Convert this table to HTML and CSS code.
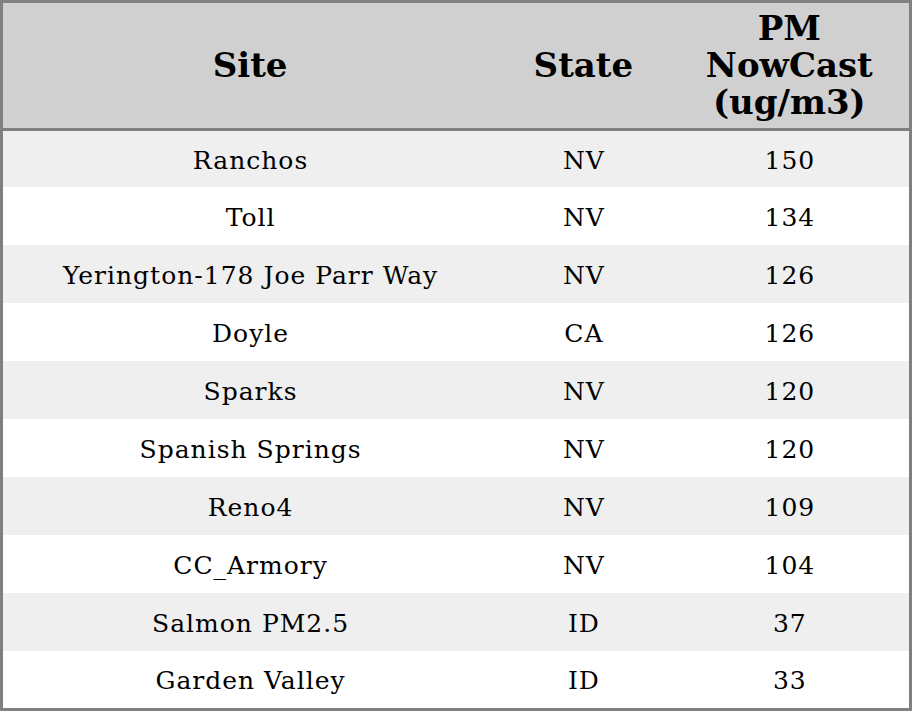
FILE: index.html
```html
<!DOCTYPE html>
<html>
<head>
<meta charset="utf-8">
<link rel="stylesheet" href="styles.css">
</head>
<body>
<table class="aq">
  <colgroup>
    <col class="c-site">
    <col class="c-state">
    <col class="c-pm">
  </colgroup>
  <thead>
    <tr><th>Site</th><th>State</th><th>PM<br>NowCast<br>(ug/m3)</th></tr>
  </thead>
  <tbody>
    <tr><td>Ranchos</td><td>NV</td><td>150</td></tr>
    <tr><td>Toll</td><td>NV</td><td>134</td></tr>
    <tr><td>Yerington-178 Joe Parr Way</td><td>NV</td><td>126</td></tr>
    <tr><td>Doyle</td><td>CA</td><td>126</td></tr>
    <tr><td>Sparks</td><td>NV</td><td>120</td></tr>
    <tr><td>Spanish Springs</td><td>NV</td><td>120</td></tr>
    <tr><td>Reno4</td><td>NV</td><td>109</td></tr>
    <tr><td>CC_Armory</td><td>NV</td><td>104</td></tr>
    <tr><td>Salmon PM2.5</td><td>ID</td><td>37</td></tr>
    <tr><td>Garden Valley</td><td>ID</td><td>33</td></tr>
  </tbody>
</table>
</body>
</html>
```
FILE: styles.css
```css
html, body {
  margin: 0;
  padding: 0;
  background: #ffffff;
}
.aq {
  width: 912px;
  border-collapse: collapse;
  table-layout: fixed;
  border: 3px solid #808080;
  font-family: "DejaVu Serif", serif;
  color: #000;
}
.c-site { width: 494px; }
.c-state { width: 172px; }
.c-pm { width: 240px; }
.aq th {
  background: #d0d0d0;
  font-size: 34px;
  font-weight: bold;
  line-height: 37px;
  height: 125px;
  text-align: center;
  padding: 0;
  border-bottom: 3px solid #808080;
}
.aq td {
  font-size: 25px;
  letter-spacing: 1px;
  text-align: center;
  height: 56px;
  padding: 2px 0 0 1px;
}
.aq tbody tr:first-child td {
  height: 54px;
}
.aq tbody tr:last-child td {
  height: 55px;
}
.aq tbody tr:nth-child(odd) td {
  background: #efefef;
}
```
